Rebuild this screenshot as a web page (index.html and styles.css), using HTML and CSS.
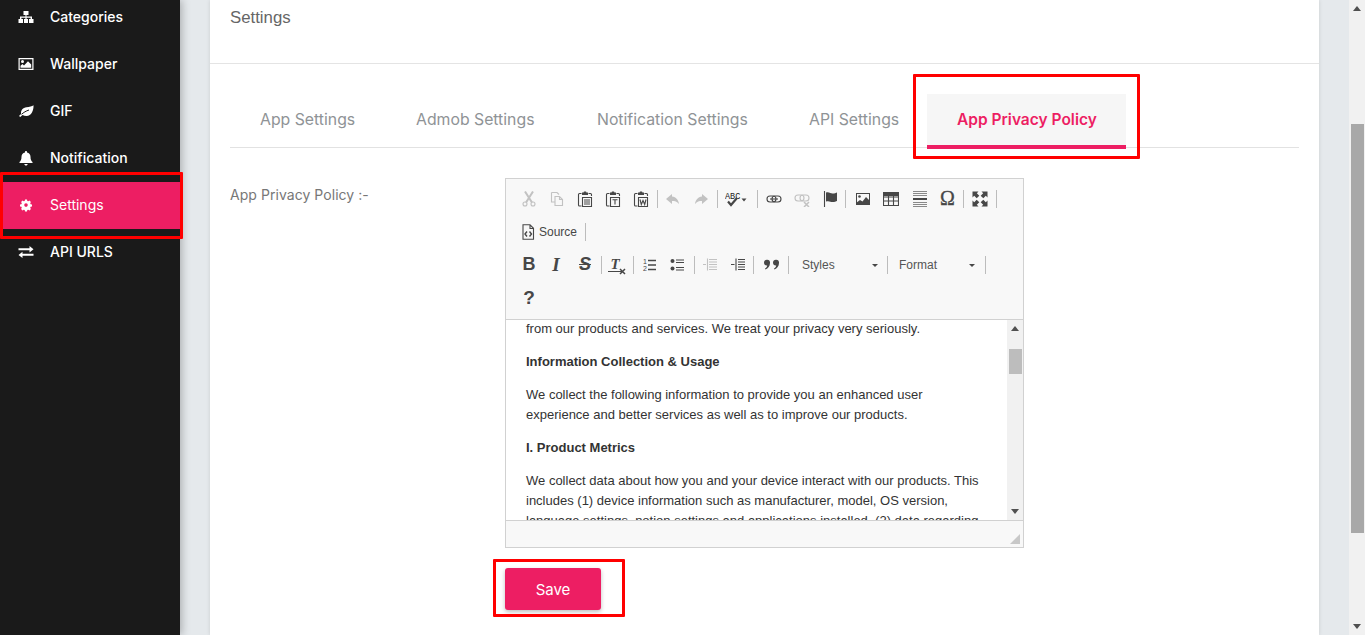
FILE: index.html
```html
<!DOCTYPE html>
<html lang="en">
<head>
<meta charset="utf-8">
<title>Settings</title>
<link rel="stylesheet" href="styles.css">
</head>
<body>
<div class="app">
  <aside class="sidebar">
    <nav class="nav">
      <a class="nav-item"><svg class="nav-ic" viewBox="0 0 16 16"><path d="M5.500 2h5v4H8.500v1.500H14V10h1.500v4h-4.500v-4h1.600V8.800H8.600V10H10v4H6v-4h1.400V8.800H3.400V10H5v4H.5v-4H2V7.500h5.500V6h-2z"/></svg><span>Categories</span></a>
      <a class="nav-item"><svg class="nav-ic" viewBox="0 0 16 16"><path fill-rule="evenodd" d="M.5 2h15v12H.5zM1.700 3.200v9.600h12.600V3.200z"/><circle cx="4.500" cy="5.600" r="1.500"/><path d="M2.500 11.800V9.800L4.500 8l1.500 1.400L10 5.300l3.200 3.300v3.200z"/></svg><span>Wallpaper</span></a>
      <a class="nav-item"><svg class="nav-ic" viewBox="0 0 16 16"><path d="M15.500 2.300c.3 5-2 10.700-7 10.700-1.500 0-2.800-.4-4-1.100-.8.700-1.500 1.500-2.200 2.100L1 13c.6-.7 1.300-1.400 2.100-2.100C2.600 7 5 4.500 8.500 4.200c3-.3 5.500-.6 7-1.900z"/><path class="vein" d="M3.500 11.300C5.500 9.500 8 8 11 7"/></svg><span>GIF</span></a>
      <a class="nav-item"><svg class="nav-ic" viewBox="0 0 16 16"><path d="M8 1c.6 0 1 .4 1 1v.4c2.200.4 3.500 2.200 3.500 4.400 0 3 .8 4.200 2 5.200v1H1.500v-1c1.200-1 2-2.200 2-5.200 0-2.200 1.300-4 3.500-4.400V2c0-.6.400-1 1-1zM6.300 14h3.400c0 .9-.8 1.500-1.700 1.500s-1.700-.6-1.700-1.500z"/></svg><span>Notification</span></a>
      <a class="nav-item active"><svg class="nav-ic" viewBox="0 0 16 16"><path fill-rule="evenodd" d="M7 2.500h2l.3 1.400 1 .4 1.200-.7 1.400 1.400-.7 1.200.4 1 1.400.3v2l-1.400.3-.4 1 .7 1.200-1.400 1.400-1.200-.7-1 .4-.3 1.400H7l-.3-1.400-1-.4-1.200.7-1.400-1.400.7-1.200-.4-1-1.400-.3v-2l1.400-.3.4-1-.7-1.200 1.400-1.400 1.200.7 1-.4zM8 6.300a1.800 1.800 0 1 0 0 3.600 1.800 1.800 0 0 0 0-3.600z"/></svg><span>Settings</span><i class="mark mark-nav"></i></a>
      <a class="nav-item"><svg class="nav-ic" viewBox="0 0 16 16"><path d="M.5 4.200h11V2l4 3.200-4 3.200V6.200H.5zM15.500 9.800H4.500V7.700l-4 3.200 4 3.100v-2.200h11z"/></svg><span>API URLS</span></a>
    </nav>
  </aside>

  <main class="main">
    <section class="card">
      <header class="card-head">Settings</header>
      <div class="card-body">
        <ul class="tabs">
          <li class="tab tab-a">App Settings</li>
          <li class="tab tab-b">Admob Settings</li>
          <li class="tab tab-c">Notification Settings</li>
          <li class="tab tab-d">API Settings</li>
          <li class="tab tab-e active">App Privacy Policy<i class="mark mark-tab"></i></li>
        </ul>

        <div class="form-row">
          <label class="form-label">App Privacy Policy :-</label>
          <div class="form-field">
            <div class="editor">
              <div class="toolbar">
                <div class="tb-row">
                  <span class="btn off"><svg viewBox="0 0 16 16"><circle cx="4" cy="13" r="2"/><circle cx="12" cy="13" r="2"/><path d="M5 11.500 12 .5M11 11.500 4 .5" stroke-width="2"/></svg></span>
                  <span class="btn off"><svg viewBox="0 0 16 16"><path d="M2.500 1.500H8l2 2M2.500 1.500V11H6M6 5.500h4.500l3 3v6H6zM10.500 5.500v3h3"/></svg></span>
                  <span class="btn"><svg viewBox="0 0 16 16"><path d="M4.500 2.500h-2a1 1 0 0 0-1 1V14a1 1 0 0 0 1 1h2M11.500 2.500h2a1 1 0 0 1 1 1V5"/><path class="solid" d="M5 1.500h1.500L7 .500h2l.5 1H11V4H5z"/><path d="M5.500 6.500h9v9h-9zM7 9h6M7 11h6M7 13h6"/></svg></span>
                  <span class="btn"><svg viewBox="0 0 16 16"><path d="M4.500 2.500h-2a1 1 0 0 0-1 1V14a1 1 0 0 0 1 1h2M11.500 2.500h2a1 1 0 0 1 1 1V5"/><path class="solid" d="M5 1.500h1.500L7 .500h2l.5 1H11V4H5z"/><path d="M5.500 6.500h9v9h-9zM7.500 8.800h5M10 8.800v4.700"/></svg></span>
                  <span class="btn"><svg viewBox="0 0 16 16"><path d="M4.500 2.500h-2a1 1 0 0 0-1 1V14a1 1 0 0 0 1 1h2M11.500 2.500h2a1 1 0 0 1 1 1V5"/><path class="solid" d="M5 1.500h1.500L7 .500h2l.5 1H11V4H5z"/><path d="M5.500 6.500h9v9h-9zM7 8.500l1.300 5 1.700-4 1.700 4 1.300-5"/></svg></span>
                  <i class="sep"></i>
                  <span class="btn off"><svg viewBox="0 0 16 16"><path class="solid dark" d="M7 3 1 8l6 5v-3c3 0 5 .5 7 3-.5-4-3-7-7-7.500z"/></svg></span>
                  <span class="btn off"><svg viewBox="0 0 16 16"><path class="solid dark" d="M9 3l6 5-6 5v-3c-3 0-5 .5-7 3 .5-4 3-7 7-7.500z"/></svg></span>
                  <i class="sep"></i>
                  <span class="btn btn-spell"><svg class="wide" viewBox="0 0 24 16"><text class="abc" x="0" y="7.500">ABC</text><path d="M3 10.500l3 3.500 6-7" stroke-width="2.200"/><path class="solid" d="M16.500 7.500h5l-2.500 3z"/></svg></span>
                  <i class="sep sep-l"></i>
                  <span class="btn"><svg viewBox="0 0 16 16"><rect x="1" y="5" width="9" height="6" rx="3"/><rect x="6" y="5" width="9" height="6" rx="3"/><path d="M4 8h8"/></svg></span>
                  <span class="btn off"><svg viewBox="0 0 16 16"><rect x="1" y="4" width="9" height="6" rx="3"/><rect x="6" y="4" width="9" height="6" rx="3"/><path d="M10 11l5 5M15 11l-5 5" stroke-width="1.500"/></svg></span>
                  <span class="btn"><svg viewBox="0 0 16 16"><path d="M2.500 0v16"/><path class="solid" d="M4 1.500c3-1 4.500 1 6.500 1s3.500-.5 4.500-1V10c-1 .5-2.500 1-4.500 1S7 9.500 4 10.500z"/></svg></span>
                  <i class="sep sep-r"></i>
                  <span class="btn"><svg viewBox="0 0 16 16"><path class="solid" fill-rule="evenodd" d="M1 2h14v12H1zM2 3v10h12V3z"/><path class="solid" d="M1 14V12l4-3 2.500 1.500L11 6l4 4v4z"/><circle class="solid" cx="4.500" cy="5.500" r="1.300"/></svg></span>
                  <span class="btn"><svg viewBox="0 0 16 16"><path class="solid" d="M0 1h16v4H0z"/><path d="M.5 1.500h15v13H.5zM.5 6h15M.5 10h15M5.500 5v9.500M10.500 5v9.500"/></svg></span>
                  <span class="btn btn-hr"><svg viewBox="0 0 16 16"><path class="thin" d="M1 .5h14M1 2.500h14M1 4.500h14M1 11.500h14M1 13.500h14M1 15.500h14"/><path d="M1 8h14" stroke-width="2"/></svg></span>
                  <span class="btn btn-text omega">Ω</span>
                  <i class="sep sep-m"></i>
                  <span class="btn"><svg viewBox="0 0 16 16"><path class="solid" d="M.5 .5h6L4.800 2.200 7.300 4.700 4.700 7.300 2.200 4.800.5 6.500zM15.500 .5v6l-1.700-1.700-2.500 2.500-2.600-2.600 2.500-2.500L9.500 .5zM.5 15.500v-6l1.700 1.700 2.500-2.500 2.600 2.600-2.500 2.500 1.700 1.700zM15.500 15.500h-6l1.700-1.700-2.500-2.500 2.600-2.600 2.500 2.500 1.700-1.700z"/></svg></span>
                  <i class="sep"></i>
                </div>
                <div class="tb-row">
                  <span class="btn btn-source"><svg viewBox="0 0 16 16"><path d="M3 .800h7l3.500 3.500v11H3zM10 1v3.500h3.500"/><path d="M7 7.500 5 10l2 2.500M9.500 7.500l2 2.500-2 2.500" stroke-width="1.400"/></svg><span class="label">Source</span></span>
                  <i class="sep"></i>
                </div>
                <div class="tb-row">
                  <span class="btn btn-text bold">B</span>
                  <span class="btn btn-text italic">I</span>
                  <span class="btn btn-text strike">S</span>
                  <i class="sep"></i>
                  <span class="btn btn-tx"><span class="tx">T</span><svg class="tx-x" viewBox="0 0 7 7"><path d="M1 1l5 5M6 1 1 6" stroke-width="1.500"/></svg></span>
                  <i class="sep"></i>
                  <span class="btn"><svg viewBox="0 0 16 16"><text class="num" x="2" y="7">1</text><text class="num" x="2" y="14">2</text><path d="M7 3.500h8M7 8h8M7 12.500h8" stroke-width="1.400"/></svg></span>
                  <span class="btn"><svg viewBox="0 0 16 16"><circle class="solid" cx="3.500" cy="4" r="2"/><circle class="solid" cx="3.500" cy="11.500" r="2"/><path d="M7 3h8M7 5.500h8M7 10.500h8M7 13h8"/></svg></span>
                  <i class="sep sep-w"></i>
                  <span class="btn off"><svg viewBox="0 0 16 16"><path d="M7 2.500h8M7 5h8M7 7.500h8M7 10h8M7 12.500h8M5.500 1.500v12M1 7.500h3" stroke-width="1.100"/></svg></span>
                  <span class="btn"><svg viewBox="0 0 16 16"><path d="M8 2.500h7M8 5h7M8 7.500h7M8 10h7M8 12.500h7M6 1.500v12M1 7.500h3.500" stroke-width="1.100"/></svg></span>
                  <i class="sep sep-q"></i>
                  <span class="btn"><svg viewBox="0 0 16 16"><path class="solid" d="M0 5.500a3 3 0 1 1 6 .5c0 3-2 5.500-4.500 6.500L1 11.500c1.300-.7 2-1.500 2.200-3A3 3 0 0 1 0 5.500zM9 5.500a3 3 0 1 1 6 .5c0 3-2 5.500-4.500 6.500l-.5-1c1.300-.7 2-1.500 2.200-3A3 3 0 0 1 9 5.500z"/></svg></span>
                  <i class="sep"></i>
                  <span class="combo combo-styles"><span class="label">Styles</span><i class="caret"></i></span>
                  <i class="sep"></i>
                  <span class="combo combo-format"><span class="label">Format</span><i class="caret"></i></span>
                  <i class="sep"></i>
                </div>
                <div class="tb-row">
                  <span class="btn btn-text help">?</span>
                </div>
              </div>

              <div class="editor-body">
                <div class="doc">
                  <p>from our products and services. We treat your privacy very seriously.</p>
                  <p><strong>Information Collection &amp; Usage</strong></p>
                  <p>We collect the following information to provide you an enhanced user<br>experience and better services as well as to improve our products.</p>
                  <p><strong>I. Product Metrics</strong></p>
                  <p>We collect data about how you and your device interact with our products. This<br>includes (1) device information such as manufacturer, model, OS version,<br>language settings, notion settings and applications installed, (2) data regarding</p>
                </div>
                <div class="ed-scroll">
                  <i class="arrow up"></i>
                  <div class="ed-track"><i class="ed-thumb"></i></div>
                  <i class="arrow down"></i>
                </div>
              </div>

              <div class="editor-foot"><i class="grip"></i></div>
            </div>
            <button class="save" type="button">Save<i class="mark mark-save"></i></button>
          </div>
        </div>
      </div>
    </section>
  </main>

  <div class="page-scroll">
    <i class="arrow up"></i>
    <div class="page-track"><i class="page-thumb"></i></div>
    <i class="arrow down"></i>
  </div>
</div>
</body>
</html>
```
FILE: styles.css
```css
* { box-sizing: border-box; }
html, body { margin: 0; height: 635px; overflow: hidden; }
body { font-family: "Inter", "Liberation Sans", sans-serif; background: #e5e9ec; color: #333; }
i { display: block; font-style: normal; }

.app { display: flex; width: 1365px; height: 635px; }

/* sidebar */
.sidebar { width: 180px; flex: none; background: #1a1a1a; box-shadow: 2px 0 8px rgba(0,0,0,.25); position: relative; z-index: 2; }
.nav { margin-top: -6px; display: flex; flex-direction: column; }
.nav-item { height: 47px; display: flex; align-items: center; padding: 0 0 2px 18px; color: #fff; font-size: 14px; font-weight: 500; position: relative; }
.nav-item span { margin-left: 16px; }
.nav-ic { width: 16px; height: 16px; flex: none; fill: #fff; }
.vein { fill: none; stroke: #1a1a1a; stroke-width: 1; }
.nav-item.active { background: #ed1e63; font-weight: 400; }

/* red annotation boxes */
.mark { position: absolute; border: 3px solid #f00; pointer-events: none; border-radius: 1px; }
.mark-nav { left: 0; top: -10px; width: 183px; height: 67px; }
.mark-tab { left: -14px; top: -20px; width: 227px; height: 85px; }
.mark-save { left: -12px; top: -9px; width: 132px; height: 58px; }

/* main */
.main { flex: 1; min-width: 0; padding: 0 30px; }
.card { background: #fff; height: 635px; box-shadow: 0 0 4px rgba(0,0,0,.12); }
.card-head { height: 64px; padding: 7px 20px 0; border-bottom: 1px solid #e4e4e4; font: 16.800px/22px "Liberation Sans", sans-serif; color: #666; }
.card-body { padding: 30px 20px 0; }

.tabs { list-style: none; margin: 0; padding: 0; display: flex; gap: 2px; border-bottom: 1px solid #e2e2e2; height: 54px; }
.tab { height: 55px; padding: 0 30px 4px; display: flex; align-items: center; font-size: 15.800px; font-weight: 400; color: #8f9396; white-space: nowrap; position: relative; }
.tab-a { width: 154px; }
.tab-b { width: 179px; }
.tab-c { width: 210px; }
.tab-d { width: 146px; }
.tab-e { width: 199px; }
.tab.active { background: #f6f6f6; color: #ed1e63; font-weight: 600; font-size: 15.500px; border-bottom: 4px solid #ed1e63; padding-bottom: 0; }

.form-row { display: flex; margin-top: 30px; }
.form-label { width: 275px; flex: none; padding-top: 8px; font-size: 14px; letter-spacing: .05px; line-height: 18px; font-weight: 400; color: #777; }
.form-field { width: 519px; }

/* editor */
.editor { width: 519px; height: 370px; border: 1px solid #d1d1d1; background: #f8f8f8; display: flex; flex-direction: column; }
.toolbar { height: 141px; flex: none; padding: 3px 0 0 9px; border-bottom: 1px solid #d1d1d1; }
.tb-row { height: 33px; display: flex; align-items: center; }
.btn { width: 28px; height: 26px; flex: none; display: flex; align-items: center; justify-content: center; color: #474747; }
.btn svg { width: 16px; height: 16px; fill: none; stroke: #474747; stroke-width: 1.100; display: block; }
.btn .solid { fill: #474747; stroke: none; }
.btn .thin { stroke: #8a8a8a; stroke-width: 1; }
.btn.off { opacity: .3; }
.btn svg.wide { width: 24px; }
.btn-hr { padding-left: 1px; }
.btn-spell { width: 37px; justify-content: flex-start; padding-left: 6px; }
.abc { font: 8.500px "Liberation Mono", monospace; fill: #222; stroke: none; }
.num { font: 7px "Liberation Sans", sans-serif; fill: #474747; stroke: none; }
.sep { width: 1px; height: 18px; flex: none; background: #bcbcbc; margin: 0 1px 0 2px; }
.sep-l { margin: 0 2px 0 1px; }
.sep-r { margin: 0 3px 0 1px; }
.sep-w { margin: 0 1px 0 3px; }
.sep-q { margin: 0 4px 0 1px; }
.sep-m { margin: 0 2px; }
.label { font: 12px/16px "Liberation Sans", sans-serif; color: #474747; }
.btn-source { width: auto; padding-left: 5px; padding-right: 6px; gap: 3px; justify-content: flex-start; }
.btn-text { font-family: "Liberation Sans", sans-serif; }
.bold { font-size: 18px; font-weight: 700; }
.italic { font: italic 700 19px "Liberation Serif", serif; padding-right: 2px; }
.strike { font: italic 700 18px "Liberation Sans", sans-serif; text-decoration: line-through; }
.help { font-size: 19px; font-weight: 700; }
.omega { font: 400 20px "Liberation Serif", serif; -webkit-text-stroke: .3px #474747; padding-left: 1px; }
.btn-tx { position: relative; }
.tx { font: italic 700 15px "Liberation Serif", serif; border-bottom: 1.500px solid #474747; line-height: 13px; padding: 0 2px; margin-left: -4px; }
.btn svg.tx-x { position: absolute; width: 7px; height: 7px; right: 5px; bottom: 3px; stroke-width: 1.500; }
.combo { height: 26px; flex: none; display: flex; align-items: center; padding-left: 12px; position: relative; }
.combo .label { color: #555; }
.combo-styles { width: 95px; }
.combo-format { width: 94px; padding-left: 10px; }
.caret { position: absolute; top: 12px; width: 0; height: 0; border: 3px solid transparent; border-top: 3px solid #474747; border-bottom: 0; }
.combo-styles .caret { left: 82px; }
.combo-format .caret { left: 80px; }

.editor-body { height: 200px; flex: none; background: #fff; position: relative; overflow: hidden; }
.doc { margin-top: -1px; padding: 0 20px; font: 13px/20px "Liberation Sans", sans-serif; color: #333; white-space: nowrap; }
.doc p { margin: 0 0 13px; }
.ed-scroll { position: absolute; right: 0; top: 0; bottom: 0; width: 16px; background: #f1f1f1; display: flex; flex-direction: column; align-items: center; }
.ed-track { flex: 1; width: 100%; position: relative; }
.ed-thumb { position: absolute; left: 2px; right: 1px; top: 14px; height: 25px; background: #bdbdbd; }
.arrow { width: 0; height: 0; flex: none; border: 4px solid transparent; }
.arrow.up { border-top: 0; border-bottom: 5px solid #505050; margin-top: 6px; margin-bottom: 4px; }
.arrow.down { border-bottom: 0; border-top: 5px solid #505050; margin-top: 4px; margin-bottom: 6px; }

.editor-foot { flex: 1; position: relative; border-top: 1px solid #d1d1d1; }
.grip { position: absolute; right: 3px; bottom: 3px; width: 0; height: 0; border-left: 10px solid transparent; border-bottom: 10px solid #c8c8c8; }

.save { display: block; position: relative; margin-top: 20px; width: 96px; height: 42px; border: 0; border-radius: 3px; background: #ed1e63; color: #fff; font: 400 15px "Inter", sans-serif; box-shadow: 0 2px 4px rgba(0,0,0,.25); padding: 0; }

/* page scrollbar */
.page-scroll { width: 16px; flex: none; background: #f1f1f1; display: flex; flex-direction: column; align-items: center; }
.page-track { flex: 1; width: 100%; position: relative; }
.page-thumb { position: absolute; left: 2px; right: 1px; top: 109px; height: 409px; background: #a8a8a8; }
```
